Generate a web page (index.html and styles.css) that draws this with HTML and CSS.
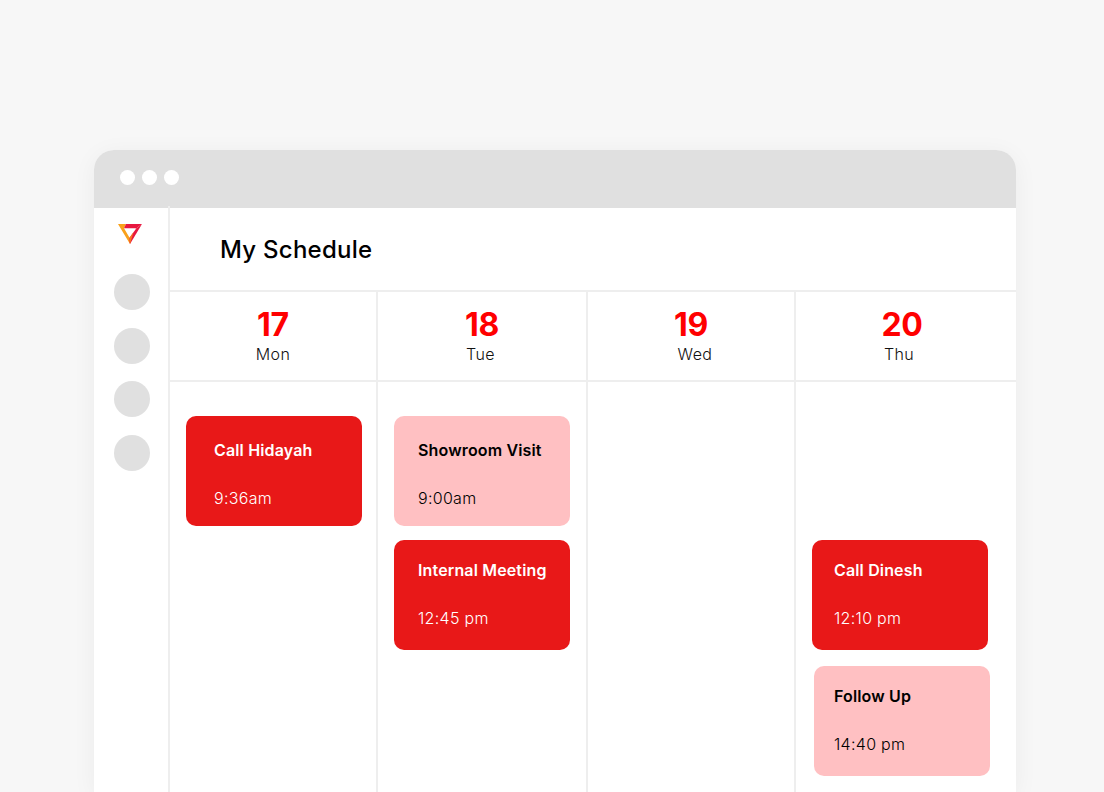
FILE: index.html
```html
<!DOCTYPE html>
<html>

<head>
    <meta charset="utf-8" />
    <title>My Schedule</title>
    <link rel="stylesheet" href="styles.css">
</head>

<body>
    <div class="window">
        <div class="titlebar">
            <span class="dot"></span>
            <span class="dot"></span>
            <span class="dot"></span>
        </div>
        <div class="app">
            <div class="sidebar">
                <svg class="logo" width="24" height="20" viewBox="0 0 24 20">
                    <path d="M0 0H8L6 4.2L12.6 15.4L12 20Z" fill="#f9a11b" />
                    <path d="M8 0H24L18.4 4.2H6Z" fill="#e8173f" />
                    <path d="M24 0L12 20L11 14.5L18.4 4.2Z" fill="#e8173f" />
                    <path d="M15.6 8L12 20L11 14.5Z" fill="#f9781f" />
                </svg>
                <span class="nav-item"></span>
                <span class="nav-item"></span>
                <span class="nav-item"></span>
                <span class="nav-item"></span>
            </div>
            <div class="main">
                <div class="header">
                    <h1>My Schedule</h1>
                </div>
                <div class="days">
                    <div class="day">
                        <div class="day-head">
                            <div class="date">17</div>
                            <div class="weekday">Mon</div>
                        </div>
                        <div class="day-body">
                            <div class="event red hidayah">
                                <div class="event-name">Call Hidayah</div>
                                <div class="event-time">9:36am</div>
                            </div>
                        </div>
                    </div>
                    <div class="day">
                        <div class="day-head">
                            <div class="date">18</div>
                            <div class="weekday tue">Tue</div>
                        </div>
                        <div class="day-body">
                            <div class="event pink">
                                <div class="event-name">Showroom Visit</div>
                                <div class="event-time">9:00am</div>
                            </div>
                            <div class="event red low">
                                <div class="event-name">Internal Meeting</div>
                                <div class="event-time">12:45 pm</div>
                            </div>
                        </div>
                    </div>
                    <div class="day">
                        <div class="day-head">
                            <div class="date">19</div>
                            <div class="weekday wed">Wed</div>
                        </div>
                        <div class="day-body"></div>
                    </div>
                    <div class="day">
                        <div class="day-head">
                            <div class="date thu-date">20</div>
                            <div class="weekday thu">Thu</div>
                        </div>
                        <div class="day-body thu-body">
                            <div class="event red low dinesh">
                                <div class="event-name">Call Dinesh</div>
                                <div class="event-time">12:10 pm</div>
                            </div>
                            <div class="event pink low follow">
                                <div class="event-name">Follow Up</div>
                                <div class="event-time">14:40 pm</div>
                            </div>
                        </div>
                    </div>
                </div>
            </div>
        </div>
    </div>
</body>

</html>
```

FILE: styles.css
```css
* {
    box-sizing: border-box;
    font-family: "Inter", "Liberation Sans", sans-serif;
}

html,
body {
    height: 792px;
    margin: 0;
    overflow: hidden;
}

body {
    background-color: #f7f7f7;
    padding: 150px 88px 0 94px;
}

.window {
    background-color: #fff;
    border-radius: 20px 20px 0 0;
    box-shadow: 0 4px 24px rgba(0, 0, 0, 0.05);
    display: flex;
    flex-direction: column;
    height: 642px;
}

.titlebar {
    align-items: center;
    background-color: #e0e0e0;
    border-radius: 20px 20px 0 0;
    display: flex;
    flex: none;
    gap: 7px;
    height: 58px;
    padding: 0 0 3px 25.5px;
}

.dot {
    background-color: #fff;
    border-radius: 50%;
    height: 15px;
    width: 15px;
}

.app {
    display: flex;
    flex: 1;
}

.sidebar {
    align-items: center;
    border-right: 2px solid #eee;
    display: flex;
    flex-direction: column;
    margin-top: -2px;
    padding: 18px 0 0 2px;
    width: 76px;
}

.logo {
    margin: 0 0 30px -4px;
}

.nav-item {
    background-color: #e0e0e0;
    border-radius: 50%;
    flex: none;
    height: 36px;
    margin-bottom: 17.67px;
    width: 36px;
}

.main {
    display: flex;
    flex: 1;
    flex-direction: column;
}

.header {
    align-items: center;
    border-bottom: 2px solid #eee;
    display: flex;
    flex: none;
    height: 84px;
    padding-left: 50px;
}

h1 {
    color: #000;
    font-size: 24px;
    font-weight: 500;
    letter-spacing: 0.25px;
    margin: 0;
}

.days {
    display: grid;
    flex: 1;
    grid-template-columns: 208px 210px 208px 220px;
}

.day {
    border-right: 2px solid #eee;
}

.day:last-child {
    border-right: 0;
}

.day-head {
    border-bottom: 2px solid #eee;
    height: 90px;
    padding-top: 14px;
    text-align: center;
}

.date {
    color: #f00;
    font-size: 32px;
    font-weight: 700;
    letter-spacing: -0.3px;
    line-height: 38px;
}

.weekday {
    color: #111;
    font-size: 16px;
    font-weight: 300;
    letter-spacing: 0.4px;
    line-height: 20px;
}

.tue {
    padding-right: 3px;
}

.wed {
    padding-left: 8px;
}

.thu-date {
    padding-right: 8px;
}

.thu {
    padding-right: 14px;
}

.day-body {
    display: flex;
    flex-direction: column;
    gap: 14px;
    padding: 34px 16px 0;
}

.thu-body {
    gap: 16px;
    padding-top: 158px;
}

.event {
    border-radius: 10px;
    flex: none;
    height: 110px;
    padding: 24px 0 0 24px;
    width: 176px;
}

.low {
    padding-top: 20px;
}

.red {
    background-color: #e81818;
    color: #fff;
}

.pink {
    background-color: #ffc0c2;
    color: #000;
}

.hidayah {
    padding-left: 28px;
}

.dinesh {
    padding-left: 22px;
}

.follow {
    margin-left: 2px;
    padding-left: 20px;
}

.event-name {
    font-size: 16px;
    font-weight: 600;
    letter-spacing: 0.15px;
    line-height: 20px;
    white-space: nowrap;
}

.event-time {
    font-size: 16px;
    font-weight: 300;
    letter-spacing: 0.3px;
    line-height: 20px;
    margin-top: 28px;
}
```
